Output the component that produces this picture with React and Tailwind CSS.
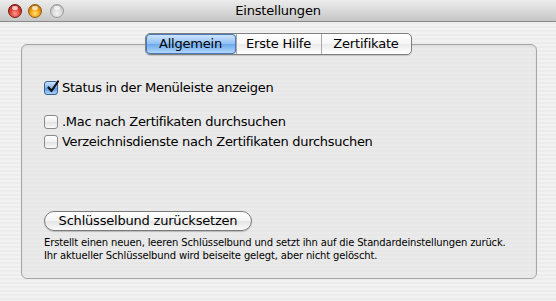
import React, { useState } from 'react';

const stripes = 'bg-[repeating-linear-gradient(180deg,#ececec_0px,#ececec_2px,#f2f2f2_2px,#f2f2f2_4px)]';

const TrafficLight = ({ color, extra = '' }) => {
  const fills = {
    red: 'bg-[radial-gradient(circle_at_50%_70%,#ff9a8a_0%,#e0443a_45%,#8f1010_100%)] border-[#7a1a14]',
    yellow: 'bg-[radial-gradient(circle_at_50%_70%,#ffe27a_0%,#f0a010_45%,#9a5a00_100%)] border-[#8a5a10]',
    gray: 'bg-[radial-gradient(circle_at_50%_70%,#f4f4f4_0%,#d6d6d6_50%,#a6a6a6_100%)] border-[#9a9a9a]',
  };
  return (
    <div className={`relative w-[14px] h-[14px] rounded-full border ${fills[color]} ${extra}`}>
      <div className="absolute left-[3px] top-[1px] w-[6px] h-[4px] rounded-full bg-white/70" />
    </div>
  );
};

const Checkbox = ({ checked, onChange, label }) => (
  <label className="flex items-center gap-[4px] h-[16px] cursor-default" onClick={onChange}>
    <span
      className={`relative w-[14px] h-[14px] rounded-[3px] border flex items-center justify-center ${
        checked
          ? 'border-[#3a5f9a] bg-[linear-gradient(180deg,#cfe4fb_0%,#7fb2ea_50%,#5a9ae0_51%,#a9d0f6_100%)]'
          : 'border-[#8a8a8a] bg-[linear-gradient(180deg,#ffffff_0%,#f0f0f0_50%,#e2e2e2_51%,#fafafa_100%)]'
      }`}
    >
      {checked && (
        <svg width="14" height="14" viewBox="0 0 14 14" className="absolute left-[1px] -top-[2px]">
          <path d="M2.5 7.5 L5.5 11 L12 1.5" fill="none" stroke="#111" strokeWidth="2.2" strokeLinecap="round" strokeLinejoin="round" />
        </svg>
      )}
    </span>
    <span className="text-[13px] leading-[16px] tracking-[-0.3px] text-black">{label}</span>
  </label>
);

export default function App() {
  const [tab, setTab] = useState('Allgemein');
  const [status, setStatus] = useState(true);
  const [mac, setMac] = useState(false);
  const [dir, setDir] = useState(false);
  const tabs = [
    { name: 'Allgemein', w: 'w-[90px]' },
    { name: 'Erste Hilfe', w: 'w-[85px]' },
    { name: 'Zertifikate', w: 'w-[90px]' },
  ];

  return (
    <div className="w-[556px] h-[301px] flex flex-col overflow-hidden font-['DejaVu_Sans',sans-serif] text-black bg-[#ececec]">
      <div className="h-[22px] shrink-0 flex items-center relative border-b border-[#8a8a8a] bg-[linear-gradient(180deg,#ececec_0%,#dadada_50%,#c6c6c6_100%)]">
        <div className="flex items-center gap-[6px] pl-[8px]">
          <TrafficLight color="red" />
          <TrafficLight color="yellow" />
          <TrafficLight color="gray" extra="ml-[2px]" />
        </div>
        <div className="absolute inset-0 flex items-center justify-center text-[13px] tracking-[-0.2px] text-black">Einstellungen</div>
      </div>

      <div className={`flex-1 flex flex-col px-[21px] pt-[11px] ${stripes}`}>
        <div className="flex justify-center relative z-10">
          <div className="flex h-[22px] rounded-[5px] border border-[#7e7e7e] bg-[linear-gradient(180deg,#ffffff_0%,#f6f6f6_50%,#ebebeb_51%,#ffffff_100%)] shadow-[0_1px_1px_rgba(0,0,0,0.15)]">
            {tabs.map((t, i) => (
              <button
                key={t.name}
                onClick={() => setTab(t.name)}
                className={`${t.w} h-full flex items-center justify-center text-[13px] tracking-[-0.2px] ${i > 0 ? 'border-l border-[#a8a8a8]' : ''} ${
                  tab === t.name
                    ? 'rounded-[4px] bg-[linear-gradient(180deg,#d4e8fc_0%,#8fc0f3_50%,#6aa8ee_51%,#bcdcfb_100%)] shadow-[inset_0_0_0_1px_#4a78b8]'
                    : ''
                }`}
              >
                {t.name}
              </button>
            ))}
          </div>
        </div>
        <div className="-mt-[11px] w-[516px] h-[235px] rounded-[6px] border border-[#a6a6a6] bg-[#e2e2e2]/50 shadow-[inset_0_1px_2px_rgba(0,0,0,0.08)] pl-[22px] pt-[35px] flex flex-col">
          <Checkbox checked={status} onChange={() => setStatus(!status)} label="Status in der Menüleiste anzeigen" />
          <div className="mt-[18px] flex flex-col gap-[4px]">
            <Checkbox checked={mac} onChange={() => setMac(!mac)} label=".Mac nach Zertifikaten durchsuchen" />
            <Checkbox checked={dir} onChange={() => setDir(!dir)} label="Verzeichnisdienste nach Zertifikaten durchsuchen" />
          </div>
          <button className="mt-[61px] w-[208px] h-[20px] rounded-full border border-[#7a7a7a] text-[13px] tracking-[-0.2px] bg-[linear-gradient(180deg,#ffffff_0%,#f4f4f4_50%,#e4e4e4_51%,#fafafa_100%)] shadow-[0_1px_1px_rgba(0,0,0,0.2)] flex items-center justify-center">
            Schlüsselbund zurücksetzen
          </button>
          <div className="mt-[5px] text-[10px] leading-[13px] tracking-[-0.15px]">
            <div>Erstellt einen neuen, leeren Schlüsselbund und setzt ihn auf die Standardeinstellungen zurück.</div>
            <div>Ihr aktueller Schlüsselbund wird beiseite gelegt, aber nicht gelöscht.</div>
          </div>
        </div>
      </div>
    </div>
  );
}
